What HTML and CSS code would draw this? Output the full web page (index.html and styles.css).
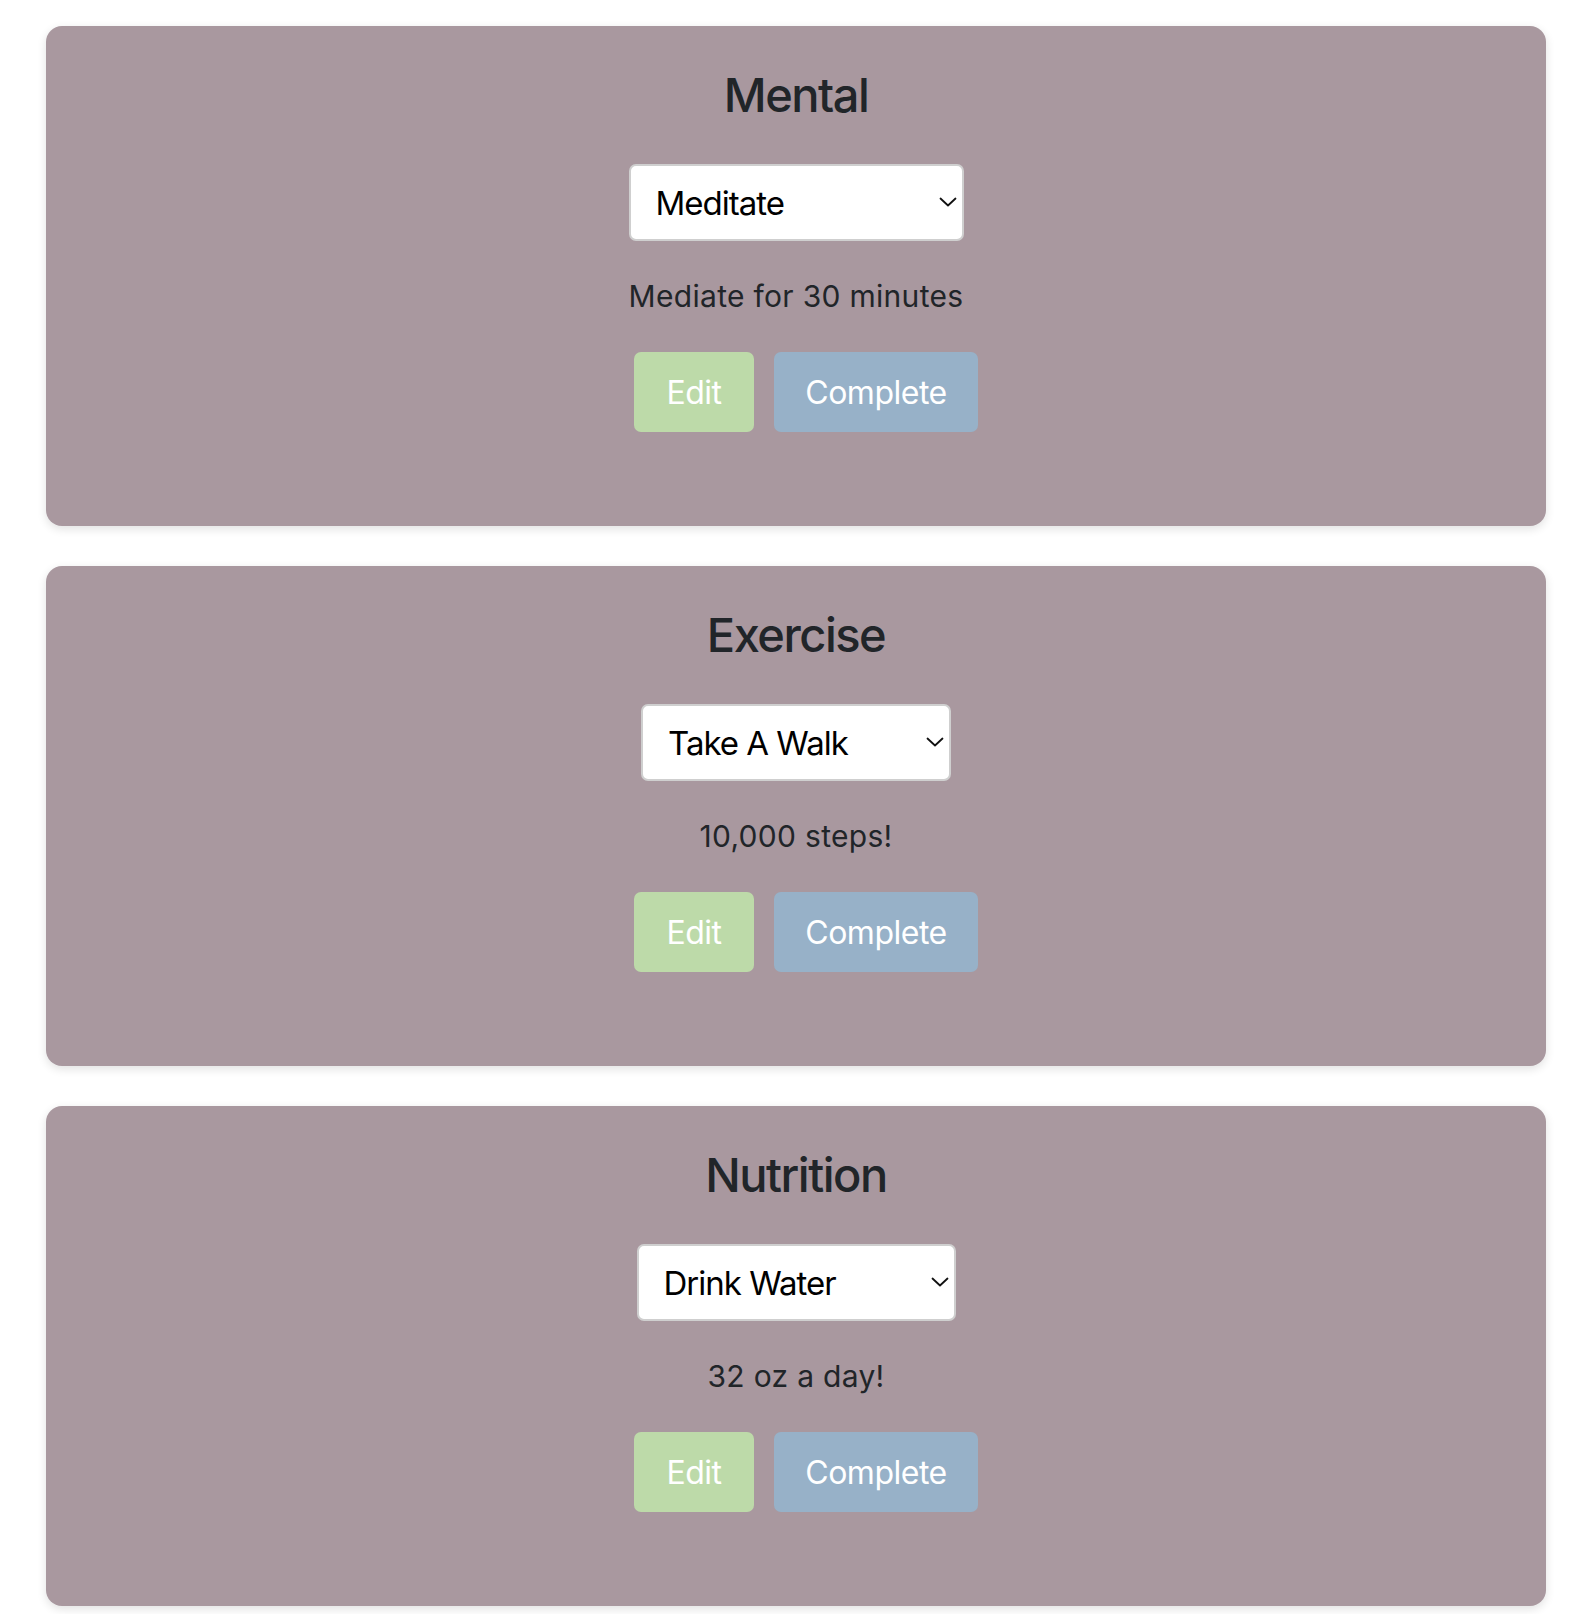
FILE: index.html
```html
<!DOCTYPE html>
<html lang="en">
<head>
<meta charset="utf-8">
<title>Habits</title>
<link rel="stylesheet" href="styles.css">
</head>
<body>
<main class="list">
  <section class="card">
    <h2 class="card-title">Mental</h2>
    <div class="select-wrap select-wrap--mental">
      <select class="select"><option>Meditate</option></select>
      <svg class="chev" viewBox="0 0 18 10" width="18" height="10"><path d="M1.5 1.5 L9 8.5 L16.5 1.5" fill="none" stroke="#111" stroke-width="1.8" stroke-linecap="round" stroke-linejoin="round"/></svg>
    </div>
    <p class="desc">Mediate for 30 minutes</p>
    <div class="actions">
      <button class="btn btn--edit">Edit</button>
      <button class="btn btn--complete">Complete</button>
    </div>
  </section>
  <section class="card">
    <h2 class="card-title">Exercise</h2>
    <div class="select-wrap select-wrap--exercise">
      <select class="select"><option>Take A Walk</option></select>
      <svg class="chev" viewBox="0 0 18 10" width="18" height="10"><path d="M1.5 1.5 L9 8.5 L16.5 1.5" fill="none" stroke="#111" stroke-width="1.8" stroke-linecap="round" stroke-linejoin="round"/></svg>
    </div>
    <p class="desc">10,000 steps!</p>
    <div class="actions">
      <button class="btn btn--edit">Edit</button>
      <button class="btn btn--complete">Complete</button>
    </div>
  </section>
  <section class="card">
    <h2 class="card-title">Nutrition</h2>
    <div class="select-wrap select-wrap--nutrition">
      <select class="select"><option>Drink Water</option></select>
      <svg class="chev" viewBox="0 0 18 10" width="18" height="10"><path d="M1.5 1.5 L9 8.5 L16.5 1.5" fill="none" stroke="#111" stroke-width="1.8" stroke-linecap="round" stroke-linejoin="round"/></svg>
    </div>
    <p class="desc">32 oz a day!</p>
    <div class="actions">
      <button class="btn btn--edit">Edit</button>
      <button class="btn btn--complete">Complete</button>
    </div>
  </section>
</main>
</body>
</html>
```
FILE: styles.css
```css
* { box-sizing: border-box; }
html, body { margin: 0; background: #ffffff; }
body {
  font-family: Inter, "Noto Sans", "Liberation Sans", sans-serif;
  color: #212529;
}
.list {
  display: flex;
  flex-direction: column;
  gap: 40px;
  padding: 26px 38px 20px 46px;
}
.card {
  height: 500px;
  background: #a9989f;
  border-radius: 16px;
  box-shadow: 0 3px 10px rgba(0, 0, 0, 0.12);
  display: flex;
  flex-direction: column;
  align-items: center;
  padding-top: 40px;
}
.card-title {
  margin: 0;
  font-size: 47px;
  font-weight: 500;
  line-height: 58px;
  letter-spacing: -1.5px;
  color: #212529;
}
.select-wrap {
  position: relative;
  margin-top: 40px;
  height: 77px;
}
.select-wrap--mental { width: 335px; }
.select-wrap--exercise { width: 310px; }
.select-wrap--nutrition { width: 319px; }
.select {
  appearance: none;
  -webkit-appearance: none;
  width: 100%;
  height: 100%;
  background: #ffffff;
  border: 2px solid #cfcfcf;
  border-radius: 7px;
  padding: 0 40px 0 25px;
  font-family: inherit;
  font-size: 33px;
  letter-spacing: -1px;
  color: #000000;
}
.chev {
  position: absolute;
  right: 7px;
  top: 33px;
  pointer-events: none;
}
.desc {
  margin: 33px 0 0;
  font-size: 30px;
  line-height: 45px;
  letter-spacing: 0.3px;
  color: #212529;
}
.actions {
  display: flex;
  gap: 20px;
  margin-top: 33px;
  padding-left: 20px;
}
.btn {
  height: 80px;
  border: none;
  border-radius: 7px;
  font-family: inherit;
  font-size: 32px;
  letter-spacing: -0.5px;
  color: #ffffff;
  padding: 0;
}
.btn--edit { width: 120px; background: #bddaa9; }
.btn--complete { width: 204px; background: #97b1c8; }
```
